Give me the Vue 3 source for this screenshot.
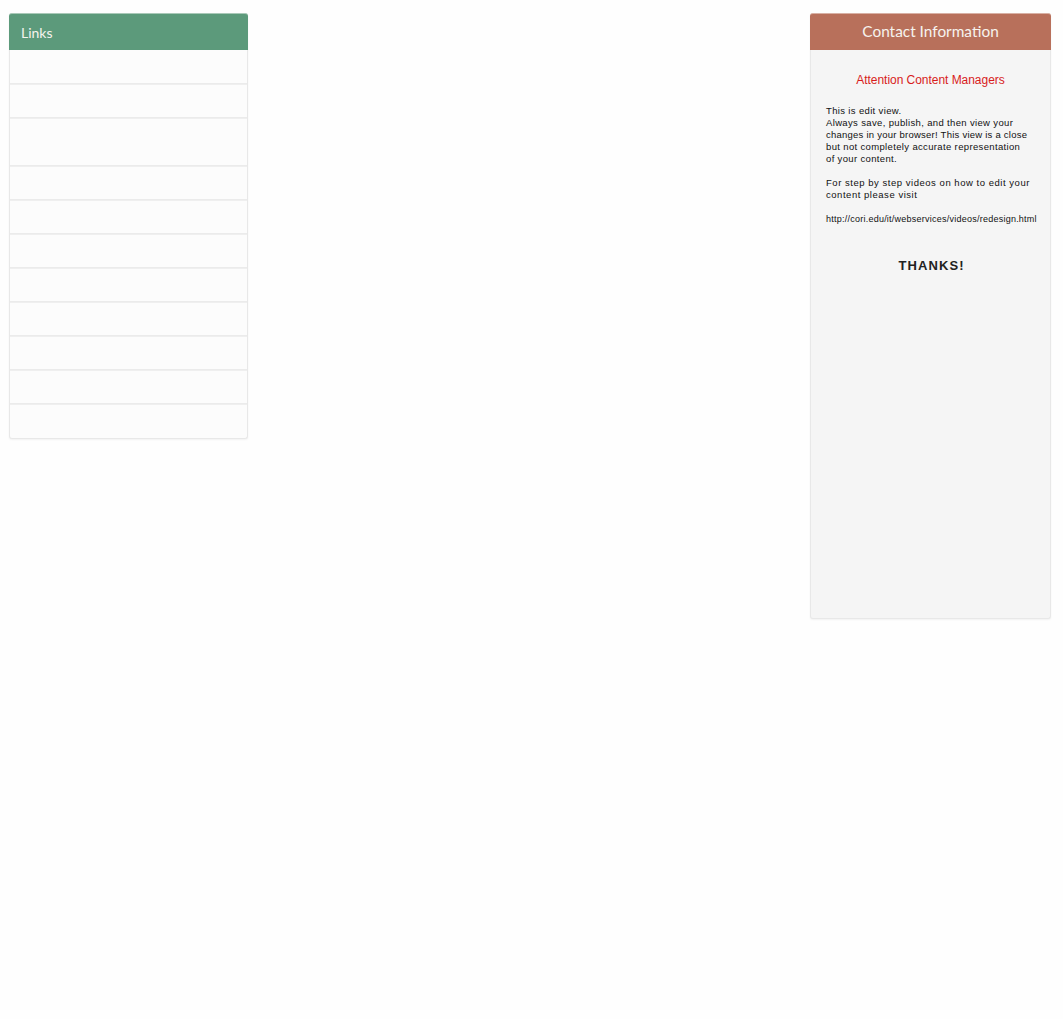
<script setup>
const links = [34, 34, 48, 34, 34, 34, 34, 34, 34, 34, 34]
</script>

<template>
  <div class="page">
    <aside class="panel links">
      <div class="panel-head links-head">Links</div>
      <div class="link-row" v-for="(height, i) in links" :key="i" :style="{ height: height + 'px' }"></div>
    </aside>

    <aside class="panel contact">
      <div class="panel-head contact-head">Contact Information</div>
      <div class="contact-body">
        <p class="attention">Attention Content Managers</p>
        <p class="note">
          This is edit view.<br />
          Always save, publish, and then view your<br />
          <span class="tight">changes in your browser! This view is a close</span><br />
          but not completely accurate representation<br />
          of your content.
        </p>
        <p class="note wide">
          For step by step videos on how to edit your<br />
          content please visit
        </p>
        <p class="url">http://cori.edu/it/webservices/videos/redesign.html</p>
        <p class="thanks">THANKS!</p>
      </div>
    </aside>
  </div>
</template>

<style>
body {
  background: #fefefe;
}
</style>

<style scoped>
.page {
  display: flex;
  justify-content: space-between;
  align-items: flex-start;
  padding: 13px 12px 400px 9px;
  font-family: "Liberation Sans", Arial, sans-serif;
}

.panel {
  border: 1px solid #e8e8e8;
  border-top: 0;
  border-radius: 3px;
  box-shadow: 0 1px 2px rgba(0, 0, 0, 0.05);
  box-sizing: border-box;
}

.links {
  width: 239px;
  background: #fcfcfc;
}

.contact {
  width: 241px;
  background: #f5f5f5;
}

.panel-head {
  height: 37px;
  margin: 0 -1px;
  border-radius: 3px 3px 0 0;
  box-sizing: border-box;
  color: #f6f3ee;
  font-family: Lato, sans-serif;
}

.links-head {
  padding: 10px 0 0 12px;
  background: #5c9a7b;
  border-top: 1px solid #a9c9b8;
  font-size: 14px;
  line-height: 18px;
}

.contact-head {
  padding-top: 7px;
  background: #b8705b;
  border-top: 1px solid #d8b0a4;
  font-size: 15.4px;
  line-height: 20px;
  text-align: center;
}

.link-row {
  box-sizing: border-box;
  border-bottom: 1px solid #ebebeb;
  box-shadow: 0 1px 0 #efefef;
}

.link-row:last-child {
  border-bottom: 0;
  box-shadow: none;
}

.contact-body {
  box-sizing: border-box;
  height: 568px;
  padding: 22px 15px 0;
  color: #111;
}

.contact-body p {
  margin: 0;
}

.attention {
  color: #d81c1c;
  font-size: 12px;
  letter-spacing: -0.04px;
  line-height: 16px;
  text-align: center;
}

.note {
  padding-top: 17px;
  font-size: 9.5px;
  letter-spacing: 0.35px;
  line-height: 12px;
  white-space: nowrap;
}

.tight {
  letter-spacing: 0.24px;
}

.note + .note {
  padding-top: 12px;
}

.wide {
  letter-spacing: 0.53px;
}

.url {
  padding-top: 12px;
  font-size: 9px;
  letter-spacing: 0.24px;
  line-height: 12px;
  white-space: nowrap;
}

.thanks {
  padding: 33px 0 0 2px;
  color: #222;
  font-size: 13px;
  font-weight: 700;
  letter-spacing: 1.1px;
  line-height: 16px;
  text-align: center;
}
</style>
